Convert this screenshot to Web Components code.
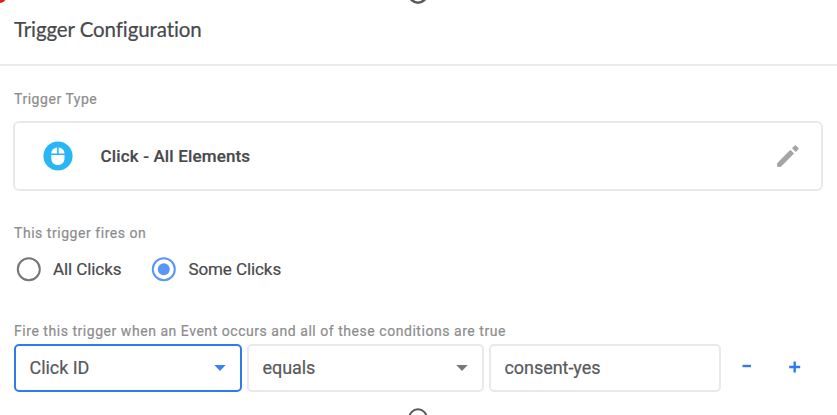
<!DOCTYPE html>
<html lang="en">
<head>
<meta charset="utf-8">
<title>Trigger Configuration</title>
<style>
html,body{margin:0;background:#fff;overflow:hidden}
body{height:415px;font-family:Roboto,"Liberation Sans",sans-serif;color:#48494b;-webkit-text-stroke:.2px currentColor}
</style>
</head>
<body>
<trigger-panel></trigger-panel>
<script>
const define = (name, html) => customElements.define(name, class extends HTMLElement {
  constructor() {
    super();
    const t = document.createElement('template');
    t.innerHTML = html;
    this.attachShadow({mode: 'open'}).append(t.content.cloneNode(true));
  }
});

define('panel-header', `<style>
:host{display:flex;align-items:center;box-sizing:border-box;height:66px;padding:0 0 7px 14px;border-bottom:2px solid #ebebec;font:400 20.5px/24px Lato,Roboto,sans-serif;letter-spacing:-.1px;color:#48494b}
</style><slot></slot>`);

define('field-label', `<style>
:host{display:block;font-size:14px;line-height:18px;letter-spacing:.54px;color:#8d8d8e;white-space:nowrap}
</style><slot></slot>`);

define('mouse-icon', `<style>:host{display:block;width:30px;height:30px}svg{display:block}</style>
<svg width="30" height="30" viewBox="0 0 30 30"><circle cx="15" cy="15" r="14.6" fill="#29b6f6"/><path fill="#fff" d="M14.1 6.4v6.2H8.3c0-3.4 2.3-5.8 5.8-6.2zM15.7 6.4c3.5.4 5.8 2.8 5.8 6.2h-5.8zM8.3 14h13.2v3.2c0 4-2.7 6.8-6.6 6.8s-6.6-2.8-6.6-6.8z"/></svg>`);

define('pencil-icon', `<style>:host{display:block;width:24px;height:24px}svg{display:block}</style>
<svg width="24" height="24" viewBox="0 0 24 24"><path fill="#a5a5a6" stroke="#a5a5a6" stroke-linejoin="round" d="M1.6 19.2V22.4h3.2L17.6 9.5l-3.3-3.2zM16.5 4.2l3.3 3.2 2.1-2c.5-.5.5-1 0-1.5l-1.9-1.8c-.5-.5-1-.5-1.5 0z"/></svg>`);

define('type-card', `<style>
:host{display:flex;align-items:center;box-sizing:border-box;height:70px;border:2px solid #e8e8ec;border-radius:6px;padding:0 21px 0 27.5px;font-weight:500;font-size:17px;line-height:20px;letter-spacing:.15px}
.name{flex:1;padding:0 0 1px 28px}
</style><mouse-icon></mouse-icon><span class="name"><slot></slot></span><pencil-icon></pencil-icon>`);

define('radio-option', `<style>
:host{display:flex;align-items:center;font-size:17px;line-height:20px;white-space:nowrap;letter-spacing:-.08px;--ring:#767677;--dot:transparent}
:host([checked]){--ring:#5a96f5;--dot:#5a96f5}
svg{display:block;margin-right:11px}
</style><svg width="26" height="26" viewBox="0 0 26 26"><circle cx="12.8" cy="13.3" r="11" fill="none" stroke="var(--ring)" stroke-width="2"/><circle cx="12.8" cy="13.3" r="6" fill="var(--dot)"/></svg><span><slot></slot></span>`);

define('condition-box', `<style>
:host{display:flex;align-items:center;box-sizing:border-box;height:48px;border:2px solid #e8e9eb;border-radius:5px;padding:0 14px 0 13.5px;font-size:18px;line-height:22px;color:#58595b;letter-spacing:-.05px;--arrow:#777}
:host([active]){border-color:#2f7bee;--arrow:#3b82f6}
span{flex:1}
svg{display:none}
:host([menu]) svg{display:block}
</style><span><slot></slot></span><svg width="12" height="6" viewBox="0 0 12 6"><path fill="var(--arrow)" d="M.3 0h11.4L6 6z"/></svg>`);

define('step-button', `<style>
:host{display:block;width:12px;height:12px;margin-bottom:2px}svg{display:block}
.v{display:none}:host([plus]) .v{display:block}
:host([plus]) .m{display:none}
</style><svg width="12" height="12" viewBox="0 0 12 12" stroke="#2f7bee" stroke-width="2.4"><path class="m" d="M1.5 5h8.5"/><path class="v" d="M.2 6h11M5.7 .5v11"/></svg>`);

define('edge-handle', `<style>
:host{display:block;position:absolute;left:408px;width:20px;height:20px;--w:2}svg{display:block}
</style><svg width="20" height="20" viewBox="0 0 20 20"><circle cx="10" cy="10" r="8.7" fill="#fff" stroke="#58585a" stroke-width="var(--w)" style="stroke-width:var(--w)"/></svg>`);

define('corner-mark', `<style>
:host{display:block;position:absolute;left:-6px;top:-9px;width:12px;height:12px;border-radius:50%;background:#e81e1e}
</style>`);

define('trigger-panel', `<style>
:host{display:block;position:relative;width:837px;height:415px;overflow:hidden}
main{padding:24px 14px 0 13px}
field-label{margin-left:1px}
type-card{margin-top:13px}
.fires{margin-top:33px}
.radios{display:flex;gap:30px;margin:14px 0 0 3px}
.when{margin-top:40px}
.row{display:flex;align-items:center;margin:4px 0 0 1px}
</style>
<panel-header>Trigger Configuration</panel-header>
<main>
<field-label>Trigger Type</field-label>
<type-card>Click - All Elements</type-card>
<field-label class="fires">This trigger fires on</field-label>
<div class="radios"><radio-option>All Clicks</radio-option><radio-option checked>Some Clicks</radio-option></div>
<field-label class="when">Fire this trigger when an Event occurs and all of these conditions are true</field-label>
<div class="row">
<condition-box menu active style="width:228px">Click ID</condition-box>
<condition-box menu style="width:237px;margin-left:5px">equals</condition-box>
<condition-box style="width:232px;margin-left:5px">consent-yes</condition-box>
<step-button style="margin-left:20px"></step-button>
<step-button plus style="margin-left:36px"></step-button>
</div>
</main>
<edge-handle style="top:-16px;--w:2.6"></edge-handle>
<edge-handle style="top:408px"></edge-handle>
<corner-mark></corner-mark>`);
</script>
</body>
</html>
